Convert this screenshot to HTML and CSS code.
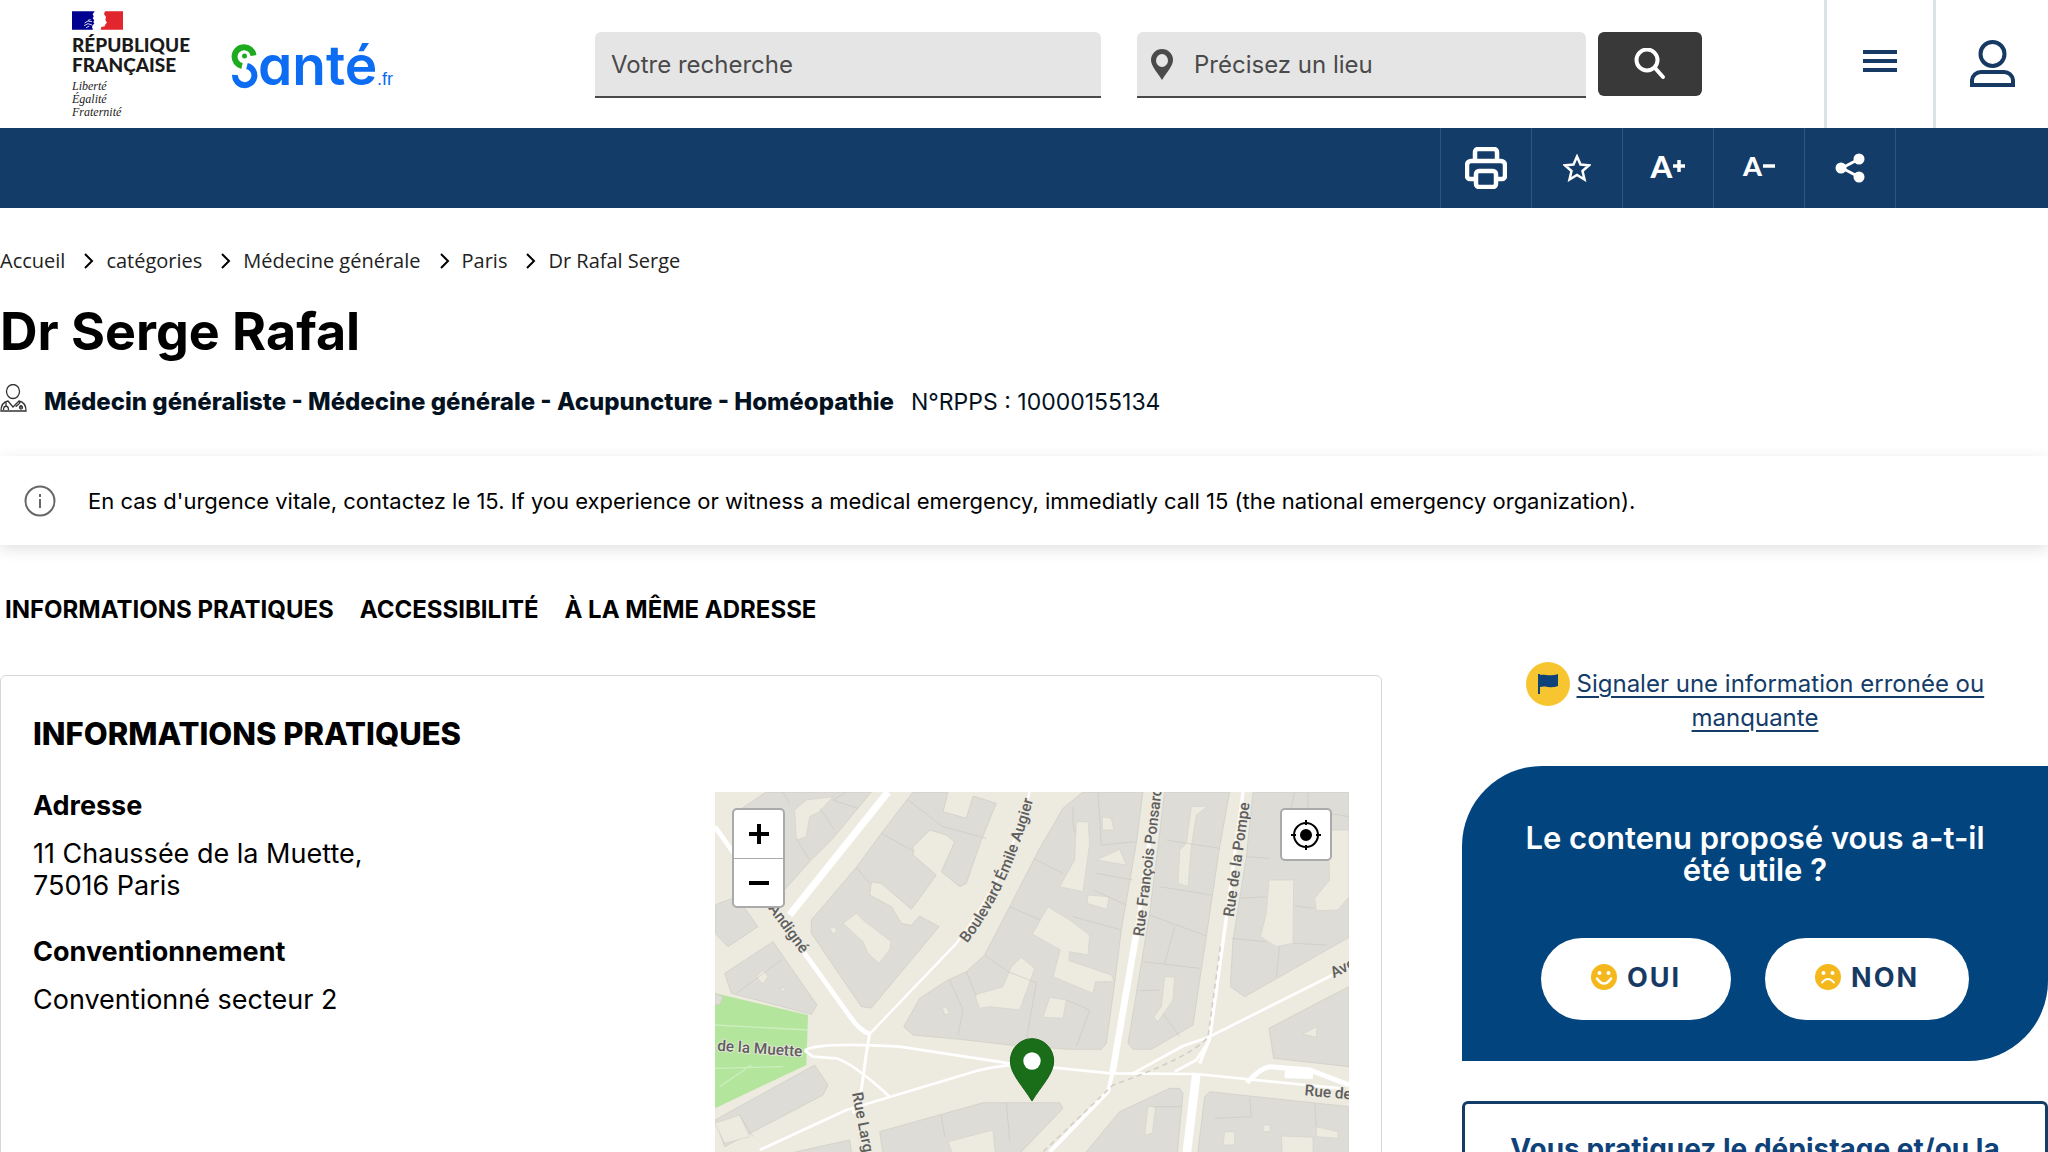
FILE: index.html
```html
<!DOCTYPE html>
<html lang="fr">
<head>
<meta charset="utf-8">
<meta name="viewport" content="width=device-width, initial-scale=1">
<title>Dr Serge Rafal - Santé.fr</title>
<link rel="stylesheet" href="styles.css">
</head>
<body>
<header class="header">
  <div class="brand">
    <a class="republic" href="#">
      <svg class="flag" viewBox="0 0 153 57" aria-hidden="true">
        <path fill="#000091" d="M0 1h68l-6 9 3 6-3 7 5 4-3 6 3 5-5 4-2 6 3 8H0z"/>
        <path fill="#e1262d" d="M99 1h54v55H86l2-8 10-2 3-8 4-2-5-10 2-8-6-9z"/>
        <path d="M38 36l10-6 12 2M36 44l12-6 12 4M42 50l10-5M48 28l8-2" fill="none" stroke="#fff" stroke-width="2.500"/>
      </svg>
      <span class="republic-name">RÉPUBLIQUE<br>FRANÇAISE</span>
      <span class="motto">Liberté<br>Égalité<br>Fraternité</span>
    </a>
    <a class="sante" href="#" aria-label="Santé.fr">
      <svg viewBox="0 0 164 52" aria-hidden="true">
        <path d="M21.500 15.500A9.500 9.500 0 1 0 10 26" fill="none" stroke="#1fab1f" stroke-width="6"/>
        <circle cx="12.500" cy="16" r="2.500" fill="#1fab1f"/>
        <path d="M15 26A9.700 9.700 0 1 1 3 35" fill="none" stroke="#0c6cf2" stroke-width="6"/>
        <text x="26" y="45" class="sante-word">anté</text>
        <text x="145" y="45" class="sante-tld">.fr</text>
      </svg>
    </a>
  </div>
  <form class="search">
    <input class="field field-what" type="text" placeholder="Votre recherche" aria-label="Votre recherche">
    <label class="field field-where">
      <svg viewBox="0 0 22 31" aria-hidden="true"><path fill="#4a4a4a" fill-rule="evenodd" d="M11 0a11 11 0 0 1 11 11c0 6-6 12-11 20C6 23 0 17 0 11A11 11 0 0 1 11 0zm0 5a6 6.500 0 1 0 0 13 6 6.500 0 0 0 0-13z"/></svg>
      <input type="text" placeholder="Précisez un lieu" aria-label="Précisez un lieu">
    </label>
    <button class="search-button" type="submit" aria-label="Rechercher">
      <svg viewBox="0 0 32 32" fill="none" stroke="#fff" stroke-width="4" stroke-linecap="round"><circle cx="13" cy="12" r="10.500"/><path d="M21 20l8 9"/></svg>
    </button>
  </form>
  <button class="header-cell cell-menu" aria-label="Menu">
    <svg viewBox="0 0 34 24" fill="#163a63"><path d="M0 1h34v4H0zM0 10h34v4H0zM0 19h34v4H0z"/></svg>
  </button>
  <button class="header-cell cell-account" aria-label="Mon compte">
    <svg viewBox="0 0 45 48" fill="none" stroke="#163a63" stroke-width="4"><circle cx="22.500" cy="14" r="12"/><path d="M2 45V40a9 9 0 0 1 9-8h23a9 9 0 0 1 9 8v5z"/></svg>
  </button>
</header>

<div class="toolbar">
  <button class="tool" aria-label="Imprimer"><svg class="ico-print" viewBox="0 0 42 42" fill="none" stroke="#fff" stroke-width="4.500" stroke-linejoin="round"><path d="M10 13V5a3 3 0 0 1 3-3h16a3 3 0 0 1 3 3v8M10 32H5a3 3 0 0 1-3-3V18a4 4 0 0 1 4-4h30a4 4 0 0 1 4 4v11a3 3 0 0 1-3 3h-5"/><rect x="11" y="24" width="20" height="16" rx="3"/></svg></button>
  <button class="tool" aria-label="Ajouter aux favoris"><svg class="ico-star" viewBox="0 0 28 28" fill="none" stroke="#fff" stroke-width="2.500"><path d="M14 2.500l3.500 8 8.500.800-6.500 5.700 2 8.500-7.500-4.500-7.500 4.500 2-8.500L2 11.300l8.500-.8z"/></svg></button>
  <button class="tool tool-text tool-plus" aria-label="Agrandir le texte">A<svg viewBox="0 0 12 12"><path d="M6 0v12M0 6h12" stroke="#fff" stroke-width="3.500"/></svg></button>
  <button class="tool tool-text" aria-label="Réduire le texte">A<svg viewBox="0 0 12 12"><path d="M0 6h12" stroke="#fff" stroke-width="3.500"/></svg></button>
  <button class="tool" aria-label="Partager"><svg class="ico-share" viewBox="0 0 30 30" fill="#fff"><path d="M7 15l17-9M7 15l17 9" stroke="#fff" stroke-width="3"/><circle cx="6" cy="15" r="5.500"/><circle cx="24" cy="6" r="5.500"/><circle cx="24" cy="24" r="5.500"/></svg></button>
</div>

<main>
  <nav class="breadcrumb" aria-label="Fil d'Ariane">
    <a href="#">Accueil</a>
    <svg viewBox="0 0 10 16"><path d="M1 1l7 7-7 7"/></svg>
    <a href="#">catégories</a>
    <svg viewBox="0 0 10 16"><path d="M1 1l7 7-7 7"/></svg>
    <a href="#">Médecine générale</a>
    <svg viewBox="0 0 10 16"><path d="M1 1l7 7-7 7"/></svg>
    <a href="#">Paris</a>
    <svg viewBox="0 0 10 16"><path d="M1 1l7 7-7 7"/></svg>
    <span>Dr Rafal Serge</span>
  </nav>

  <h1 class="name">Dr Serge Rafal</h1>
  <p class="speciality">
    <svg viewBox="0 0 27 28" fill="none" stroke="#333" stroke-width="1.300"><ellipse cx="13" cy="7.500" rx="6.500" ry="7"/><path d="M8 17c-5 1-7 4-7 10h25c0-6-2-9-7-10l-6 6zM6 18v4M3.500 26c0-5 5-5 5 0M20 18c-1 4-4 3-4 5M21 21v3"/><circle cx="21" cy="23.500" r="1.500"/></svg>
    <strong>Médecin généraliste - Médecine générale - Acupuncture - Homéopathie</strong>
    <span class="rpps">N°RPPS : 10000155134</span>
  </p>

  <div class="alert" role="note">
    <svg viewBox="0 0 32 32" fill="none" stroke="#666" stroke-width="2"><circle cx="16" cy="16" r="14.500"/><path d="M16 14v9M16 9v3"/></svg>
    <p>En cas d'urgence vitale, contactez le 15. If you experience or witness a medical emergency, immediatly call 15 (the national emergency organization).</p>
  </div>

  <nav class="anchors" aria-label="Sections">
    <a href="#infos">INFORMATIONS PRATIQUES</a>
    <a href="#access">ACCESSIBILITÉ</a>
    <a href="#same">À LA MÊME ADRESSE</a>
  </nav>

  <div class="columns">
    <section class="card" id="infos">
      <h2>INFORMATIONS PRATIQUES</h2>
      <div class="card-body">
        <div class="details">
          <h3>Adresse</h3>
          <p>11 Chaussée de la Muette,<br>75016 Paris</p>
          <h3>Conventionnement</h3>
          <p>Conventionné secteur 2</p>
        </div>
        <div class="map">
          <svg class="map-canvas" viewBox="46 36 1902 1116" preserveAspectRatio="xMinYMin slice" role="img" aria-label="Plan du quartier">
            <rect x="46" y="36" width="1902" height="1200" fill="#edeae0"/>
            <path fill="#b3e59c" d="M46 640L325 705L320 855L46 985z"/>
            <g fill="none" stroke="#cdeebd" stroke-width="4"><path d="M46 735L325 750M46 865L250 860M60 920L155 855"/></g>
            <g class="blocks">
              <path d="M105 100L200 36H515L400 175L330 245L250 335V200H110z"/>
              <path d="M46 375L110 350L175 440L85 500L46 460z"/>
              <path d="M75 580L220 485L352 675L335 703L95 640z"/>
              <path d="M46 640L70 650L60 675L46 672z"/>
              <path d="M46 1020L345 855L385 915L370 945L75 1100z"/>
              <path d="M640 36L545 160L470 262L335 420V460L485 680L515 684L718 440L660 408L635 436L605 430L575 380L510 345L515 305L545 310L635 388L710 285L640 225L640 200L690 150L740 165L765 185L725 275L780 320L800 310L845 180L890 70L820 48L800 115L730 95L745 36z"/>
              <path d="M1150 36L1090 85L1020 205L930 380L855 525L800 575L745 600L660 655L612 740L640 765L780 778L930 795L1110 808L1205 808L1220 790L1245 610L1265 450L1310 190L1330 36z"/>
              <path d="M1395 36H1590L1560 200L1520 470L1480 735L1355 808H1300L1285 790L1310 640L1350 400z"/>
              <path d="M1660 36H1948V472L1635 650L1592 620L1600 480L1640 230z"/>
              <path d="M1708 745L1870 660L1948 620V860L1722 835z"/>
              <path d="M1530 935L1948 980V1152H1490L1515 950z"/>
              <path d="M1440 925L1410 925L1260 995L1130 1152H1430L1450 940z"/>
              <path d="M540 1055L850 968H1080L1090 985L930 1152H555z"/>
              <path d="M285 1116L450 1080L460 1152H280z"/>
            </g>
            <g class="yards">
              <path d="M285 90L320 60L400 50L360 95L330 110L320 170L290 180z"/>
              <path d="M430 430L470 400L490 420L575 485L570 510L538 550L505 520L490 485z"/>
              <path d="M965 532L1005 565L960 690L870 680L840 685L825 645L910 620L935 560z"/>
              <path d="M1045 380L1110 420L1170 465L1165 525L1110 515L1108 542L1235 585L1243 605L1188 605L1180 640L1060 590L1082 510L998 462z"/>
              <path d="M1130 125H1165L1170 190L1150 335L1080 320L1125 240z"/>
              <path d="M1190 240L1260 208L1280 255z"/>
              <path d="M1165 345L1228 350L1222 388L1162 370z"/>
              <path d="M1050 652L1100 660L1090 715L1030 712z"/>
              <path d="M1208 110L1235 115L1243 150H1208z"/>
              <path d="M1475 80L1525 78L1490 105L1475 200L1465 320L1435 310L1440 210L1460 190z"/>
              <path d="M1395 590L1425 592L1420 660L1375 725L1362 712L1385 680z"/>
              <path d="M1708 300H1782L1780 490L1730 500L1682 470L1700 400z"/>
              <path d="M1885 150H1948V350L1915 390L1850 392L1845 355L1890 300z"/>
              <path d="M1808 762L1852 740L1850 772z"/>
              <path d="M170 590L190 570L205 590L190 612zM240 622L258 625L250 635z"/>
              <path d="M390 445L405 440L412 455L400 462z"/>
              <path d="M46 1030L120 1005L150 1070L75 1090z"/>
              <path d="M745 1085L880 1050L890 1152H770z"/>
              <path d="M1745 1068L1840 1072V1152H1750zM1575 1055H1605V1095H1570zM1690 1035H1712V1055H1690zM1850 1040L1915 1055V1075L1850 1070z"/>
              <path d="M1345 980H1368L1358 1060L1335 1065z"/>
              <path d="M728 685L740 680L750 700L735 705z"/>
            </g>
            <g class="parcels">
              <path d="M360 85L405 150M290 175L330 240M250 36L270 70M440 36L400 60L475 85"/>
              <path d="M545 160L645 215M625 60L730 140L860 175M470 262L510 310"/>
              <path d="M110 640L245 540M1000 235L1090 280M930 380L1020 420M855 525L925 575L1010 608M750 600L790 690L775 765M800 575L830 650M1010 608L980 780"/>
              <path d="M1120 80V130L1125 160M1195 36L1205 195L1310 185M1190 280L1300 300M1180 330L1280 375M1120 410L1265 450M1100 660L1170 690L1130 800"/>
              <path d="M1400 180L1560 205M1380 320L1535 345M1350 405L1520 468M1425 440L1395 550M1330 545L1500 565M1320 632L1380 630"/>
              <path d="M1390 700L1440 770M1640 230L1710 235M1620 355L1700 350M1595 475L1700 485M1782 490L1880 495M1740 500L1730 590M1785 378L1845 385M1770 100L1785 36M1825 36V90L1948 110"/>
              <path d="M1650 950L1655 1010L1545 1015M1845 970L1850 1040M725 1005L735 1070M920 968L930 1080M120 1005L160 1070M1360 980L1445 980"/>
            </g>
            <g class="streets">
              <path stroke-width="22" d="M565 36L270 405"/>
              <path stroke-width="14" d="M46 140L315 520L455 715Q480 750 510 762"/>
              <path stroke-width="7" d="M510 762L770 490Q920 300 990 36"/>
              <path stroke-width="9" d="M510 762L500 820L485 930L460 1000"/>
              <path stroke-width="8" d="M315 812Q350 785 600 800L930 850L1235 880L1490 882L1920 925"/>
              <path stroke-width="8" d="M315 812L340 830L410 835Q460 850 570 950"/>
              <path stroke-width="8" d="M1000 852Q880 855 800 882L440 990L180 1110"/>
              <path stroke-width="12" d="M1370 36L1310 460"/>
              <path stroke-width="20" d="M1310 460L1238 880"/>
              <path stroke-width="12" d="M1238 880L1225 935L1050 1116"/>
              <path stroke-width="10" d="M1630 36L1575 450L1530 775L1500 850"/>
              <path stroke-width="26" d="M1490 882L1460 1130"/>
              <path stroke-width="8" d="M1300 880L1450 798L1530 770L1948 560M1530 780L1490 840L1425 875"/>
              <path stroke-width="15" d="M1642 908Q1680 865 1710 860L1830 870L1948 915"/>
              <path stroke-width="26" d="M1755 882L1840 884"/>
            </g>
            <path fill="none" stroke="#d3d0c9" stroke-width="5" stroke-dasharray="16 12" d="M1562 500L1525 770Q1480 830 1240 915L1030 1116"/>
            <g class="labels">
              <text transform="translate(205 385) rotate(54)">Andigné</text>
              <text transform="translate(52 812) rotate(4)">de la Muette</text>
              <text transform="translate(457 940) rotate(79)">Rue Largillière</text>
              <path id="augier" fill="none" stroke="none" d="M802 490Q930 330 1006 40"/>
              <text><textPath href="#augier">Boulevard Émile Augier</textPath></text>
              <text transform="translate(1332 470) rotate(-83)">Rue François Ponsard</text>
              <text transform="translate(1602 412) rotate(-82)">Rue de la Pompe</text>
              <text transform="translate(1902 595) rotate(-28)">Avenue</text>
              <text transform="translate(1814 946) rotate(5)">Rue de Passy</text>
            </g>
            <path fill="#1a6e1a" stroke="#156015" stroke-width="3" d="M997 776a65 67 0 0 1 65 67c0 40-38 75-65 120c-27-45-65-80-65-120a65 67 0 0 1 65-67z"/>
            <circle cx="997" cy="843" r="26" fill="#fff"/>
          </svg>
          <div class="zoom">
            <button aria-label="Zoomer"><svg viewBox="0 0 20 20"><path d="M10 0v20M0 10h20"/></svg></button>
            <button aria-label="Dézoomer"><svg viewBox="0 0 20 20"><path d="M0 10h20"/></svg></button>
          </div>
          <button class="locate" aria-label="Me localiser"><svg viewBox="0 0 30 30" fill="none" stroke="#000" stroke-width="2"><circle cx="15" cy="15" r="12"/><circle cx="15" cy="15" r="5" fill="#000"/><path d="M15 0v5M15 25v5M0 15h5M25 15h5"/></svg></button>
        </div>
      </div>
    </section>

    <aside class="side">
      <p class="report">
        <svg viewBox="0 0 44 44" aria-hidden="true"><circle cx="22" cy="22" r="22" fill="#f7c52f"/><path fill="#10427a" d="M12 12h2v1c5-1 9 2 18-1v12c-8 3-12-1-18 1v7h-2z"/></svg>
        <a href="#">Signaler une information erronée ou manquante</a>
      </p>
      <section class="feedback">
        <h2>Le contenu proposé vous a-t-il été utile ?</h2>
        <div class="answers">
          <button><svg viewBox="0 0 26 26"><circle cx="13" cy="13" r="13" fill="#f5b81c"/><circle cx="8.500" cy="9" r="2" fill="#fff"/><circle cx="17.500" cy="9" r="2" fill="#fff"/><path d="M6 14.500q7 10 14 0" fill="none" stroke="#fff" stroke-width="2.500" stroke-linecap="round"/></svg>OUI</button>
          <button><svg viewBox="0 0 26 26"><circle cx="13" cy="13" r="13" fill="#f5b81c"/><circle cx="8.500" cy="9" r="2" fill="#fff"/><circle cx="17.500" cy="9" r="2" fill="#fff"/><path d="M7 18.500q6-7 12 0" fill="none" stroke="#fff" stroke-width="2" stroke-linecap="round"/></svg>NON</button>
        </div>
      </section>
      <section class="screening">
        <h2>Vous pratiquez le dépistage et/ou la</h2>
      </section>
    </aside>
  </div>
</main>
</body>
</html>
```
FILE: styles.css
```css
* { box-sizing: border-box; }
body {
  margin: 0;
  background: #fff;
  color: #000;
  font-family: Inter, "Liberation Sans", sans-serif;
  font-size: 22px;
}
h1, h2, h3, p { margin: 0; }
button, input { font: inherit; color: inherit; border: 0; background: none; padding: 0; }
button { display: flex; align-items: center; justify-content: center; }
a { color: inherit; text-decoration: none; }
svg { display: block; flex: none; }

/* Header */
.header { display: flex; height: 128px; }
.brand { display: flex; flex: 0 0 595px; padding: 11px 0 0 72px; }
.republic { display: flex; flex-direction: column; width: 160px; }
.flag { width: 51px; height: 19px; }
.republic-name {
  margin-top: 5px;
  font: 900 19px/20px Lato, sans-serif;
  color: #1a1a1a;
}
.motto { margin-top: 5px; font: italic 12px/13px "Liberation Serif", serif; color: #222; }
.sante { margin-top: 29px; }
.sante svg { width: 164px; height: 52px; overflow: visible; }
.sante-word { font: 600 55px Inter, sans-serif; font-feature-settings: "cv11"; fill: #0c6cf2; }
.sante-tld { font: 18px "Liberation Sans", sans-serif; fill: #0c6cf2; }

.search {
  display: grid;
  grid-template-columns: 542fr 461fr 104px;
  flex: 1;
  align-items: start;
  padding-top: 32px;
  margin-right: 122px;
  color: #4a4a4a;
  font-size: 24px;
}
.field { height: 66px; background: #e5e5e5; border-bottom: 2px solid #4a4a4a; border-radius: 6px 6px 0 0; }
.field-what { min-width: 0; padding: 0 16px; margin-right: 36px; }
.field-where { display: flex; align-items: center; min-width: 0; padding-left: 14px; gap: 21px; margin-right: 12px; }
.field-where svg { width: 22px; height: 31px; }
.field-where input { flex: 1; min-width: 0; height: 100%; }
input::placeholder { color: #4a4a4a; opacity: 1; }
.search-button { height: 64px; border-radius: 6px; background: #393939; }
.search-button svg { width: 32px; height: 32px; }
.header-cell { height: 128px; border-left: 3px solid #dbe3e6; }
.cell-menu { flex: 0 0 109px; padding-bottom: 6px; }
.cell-menu svg { width: 34px; height: 24px; }
.cell-account { flex: 0 0 115px; }
.cell-account svg { width: 45px; height: 48px; }

/* Page tools */
.toolbar { display: flex; justify-content: flex-end; height: 80px; padding-right: 152px; background: #133c69; }
.tool { width: 91px; border-left: 1px solid #2f5580; color: #fff; }
.tool:last-child { width: 92px; border-right: 1px solid #2f5580; }
.tool-text { gap: 1px; padding-bottom: 4px; font: 900 27px/32px Lato, sans-serif; }
.tool-plus { font-size: 31px; }
.tool-text svg { width: 12px; height: 12px; }
.ico-print { width: 42px; height: 42px; }
.ico-star { width: 28px; height: 28px; }
.ico-share { width: 30px; height: 30px; }

/* Identity */
.breadcrumb { display: flex; align-items: center; gap: 12px; padding: 39px 0 0; font: 20px/28px "Open Sans", sans-serif; color: #222; }
.breadcrumb svg { width: 10px; height: 16px; margin-left: 7px; fill: none; stroke: #000; stroke-width: 2; }
.name { margin-top: 25px; font-size: 52px; line-height: 64px; font-weight: 700; }
.speciality { display: flex; align-items: center; margin-top: 20px; gap: 17px; font-size: 24px; line-height: 36px; color: #04121f; }
.speciality svg { width: 27px; height: 28px; margin-bottom: 8px; }
.speciality strong { font-weight: 800; }
.rpps { font-size: 23px; }

.alert {
  display: flex;
  align-items: center;
  gap: 32px;
  min-height: 89px;
  margin-top: 36px;
  padding: 0 24px;
  box-shadow: 0 4px 14px rgba(0, 0, 0, .12);
}
.alert svg { width: 32px; height: 32px; }

.anchors { display: flex; gap: 26px; padding: 51px 5px 0; font-size: 24px; font-weight: 700; line-height: 28px; }

/* Main content */
.columns { display: grid; grid-template-columns: 1382fr 586fr; gap: 80px; margin-top: 38px; align-items: start; }
.card { margin-top: 13px; padding: 40px 32px 32px; border: 1px solid #d6d6d6; border-radius: 6px; }
.card h2 { font-size: 31px; line-height: 36px; font-weight: 800; }
.card-body { display: grid; grid-template-columns: 1fr 634px; margin-top: 40px; }
.details { font-size: 27px; line-height: 32px; margin-top: -2px; }
.details h3 { margin-bottom: 16px; font-size: inherit; font-weight: 700; }
.details p { margin-bottom: 34px; }
.map { position: relative; height: 372px; overflow: hidden; }
.map-canvas { width: 100%; height: 100%; }
.blocks { fill: #dddcd6; stroke: #cdcac2; stroke-width: 2; }
.yards { fill: #edeae0; stroke: #d5d2ca; stroke-width: 2; }
.parcels { fill: none; stroke: #cbc9c1; stroke-width: 2; }
.streets { fill: none; stroke: #fff; stroke-linejoin: round; }
.labels { font: 500 46px Roboto, sans-serif; fill: #5e5e5e; stroke: #edeae0; stroke-width: 5px; paint-order: stroke; }
.zoom, .locate { position: absolute; background: #fff; border: 2px solid #aaa; border-radius: 5px; }
.zoom { top: 16px; left: 17px; width: 53px; }
.zoom button { width: 49px; height: 48px; }
.zoom button + button { border-top: 1px solid #aaa; }
.zoom svg { width: 20px; height: 20px; stroke: #000; stroke-width: 4; }
.locate { top: 16px; right: 17px; width: 52px; height: 53px; }
.locate svg { width: 30px; height: 30px; }

.report { padding: 0 48px; font-size: 24px; line-height: 34px; text-align: center; color: #133c69; }
.report svg { display: inline-block; width: 44px; height: 44px; margin: 0 0 -14px; }
.report a { text-decoration: underline; text-underline-offset: 4px; }
.feedback { margin-top: 31px; padding: 56px 40px 41px; background: #01447e; border-radius: 80px 0 80px 0; }
.feedback h2 { padding: 0 16px; color: #fff; font-size: 31px; line-height: 32px; font-weight: 600; text-align: center; }
.answers { display: flex; justify-content: center; gap: 34px; margin-top: 52px; }
.answers button { gap: 10px; height: 82px; padding: 0 50px 4px; border-radius: 41px; background: #fff; color: #163a63; font-size: 27px; font-weight: 700; letter-spacing: 2px; }
.answers svg { width: 26px; height: 26px; }
.screening { margin-top: 40px; padding: 28px 24px; border: 3px solid #133c69; border-radius: 6px; }
.screening h2 { color: #10427a; font-size: 28px; line-height: 34px; font-weight: 700; text-align: center; }
```
